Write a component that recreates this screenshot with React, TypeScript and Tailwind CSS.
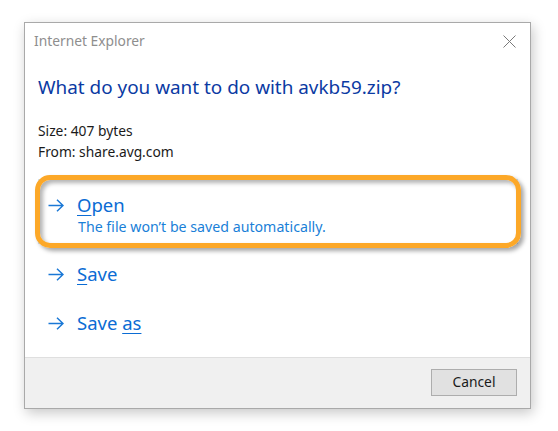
import React from "react";

const Arrow = () => (
  <svg width="16" height="13" viewBox="0 0 16 13" className="shrink-0">
    <path d="M0.5 6.5 H15 M9 0.8 L15 6.5 L9 12.2" fill="none" stroke="#1a78d6" strokeWidth="1.5" />
  </svg>
);

export default function App() {
  return (
    <div className="w-[558px] h-[431px] bg-white pt-[22px] pl-[24px]" style={{ fontFamily: '"Noto Sans", "Open Sans", sans-serif' }}>
      <div className="w-[507px] h-[387px] border border-[#a9a9a9] bg-white flex flex-col shadow-[2px_4px_12px_rgba(0,0,0,0.22)]">
        <div className="flex items-start justify-between pt-[8px] pl-[9px] pr-[14px]">
          <div className="text-[13.8px] leading-[20px] text-[#8e8e8e]">Internet Explorer</div>
          <svg width="13" height="13" viewBox="0 0 13 13" className="mt-[4px]">
            <path d="M0.5 0.5 L12.5 12.5 M12.5 0.5 L0.5 12.5" stroke="#7a7a7a" strokeWidth="1" />
          </svg>
        </div>
        <div className="flex-1 pl-[13px] pr-[12px]">
          <div className="mt-[23px] text-[18.9px] leading-[26px] text-[#0b3aa3]">What do you want to do with avkb59.zip?</div>
          <div className="mt-[20px] text-[13.8px] leading-[21px] text-[#1a1a1a]">
            <div>Size: 407 bytes</div>
            <div>From: share.avg.com</div>
          </div>
          <div className="relative mt-[17px] h-[65px] pl-[9px] pt-[12px] flex gap-[13px] border border-[#d3e2ee]">
            <div className="pt-[7px]"><Arrow /></div>
            <div>
              <div className="text-[18.5px] leading-[25px] text-[#0b6cd4]"><span className="underline underline-offset-[3px] decoration-1">O</span>pen</div>
              <div className="text-[14.2px] leading-[20px] text-[#1a7fd8] pl-[1px]">The file won’t be saved automatically.</div>
            </div>
            <div className="absolute left-[-4px] top-[-5px] right-[-4px] bottom-[-5px] rounded-[15px] border-[5px] border-[#fca828] shadow-[3px_3px_4px_rgba(0,0,0,0.35),inset_3px_3px_4px_rgba(0,0,0,0.3)]" />
          </div>
          <div className="h-[49px] pl-[10px] pt-[17px] flex gap-[13px]">
            <div className="pt-[7px]"><Arrow /></div>
            <div className="text-[18.5px] leading-[25px] text-[#0b6cd4]"><span className="underline underline-offset-[3px] decoration-1">S</span>ave</div>
          </div>
          <div className="h-[49px] pl-[10px] pt-[17px] flex gap-[13px]">
            <div className="pt-[7px]"><Arrow /></div>
            <div className="text-[18.5px] leading-[25px] text-[#0b6cd4]">Save <span className="underline underline-offset-[3px] decoration-1">as</span></div>
          </div>
        </div>
        <div className="h-[51px] border-t border-[#dfdfdf] bg-[#f0f0f0] flex justify-end items-start pr-[13px] pt-[11px]">
          <div className="w-[86px] h-[27px] border border-[#adadad] bg-[#e1e1e1] flex items-center justify-center text-[13.8px] text-[#1a1a1a]">Cancel</div>
        </div>
      </div>
    </div>
  );
}
